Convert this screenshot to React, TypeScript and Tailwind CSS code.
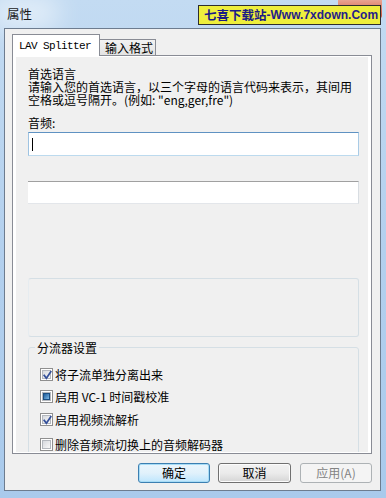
import React from "react";

type CheckState = "on" | "off" | "mixed";

function Check({ state }: { state: CheckState }) {
  return (
    <div className="relative w-[13px] h-[13px] shrink-0 border border-[#8f8f8f] bg-white p-[1px]">
      <div className="w-full h-full border border-[#b3b7bd] bg-gradient-to-br from-[#d6d9de] to-[#f8f8f8] flex items-center justify-center">
        {state === "mixed" && (
          <div className="w-[7px] h-[7px] border border-[#1d4f82] bg-gradient-to-br from-[#1f5e9c] to-[#7cb8e4]" />
        )}
      </div>
      {state === "on" && (
        <svg className="absolute left-0 top-0" width="13" height="13" viewBox="0 0 13 13">
          <path d="M3.2 6.4 L5.4 9.2 L9.8 2.8" fill="none" stroke="#34509a" strokeWidth="1.7" strokeLinecap="square" />
        </svg>
      )}
    </div>
  );
}

function Row({ state, children, mt }: { state: CheckState; children: React.ReactNode; mt: string }) {
  return (
    <div className={`flex items-center h-[13px] gap-[2px] ${mt}`}>
      <Check state={state} />
      <span className="text-[12px] leading-[13px] text-black whitespace-nowrap">{children}</span>
    </div>
  );
}

export default function App() {
  return (
    <div className="relative w-[386px] h-[498px] overflow-hidden bg-gradient-to-b from-[#c3dbf2] via-[#b3d0ee] to-[#a9caec] font-['Noto_Sans_CJK_SC',sans-serif]">
      <div className="absolute left-[-10px] top-[-4px] w-[70px] h-[34px] rounded-full bg-white/50 blur-md" />
      <div className="absolute left-[338px] top-0 w-[44px] h-[19px] rounded-b-[4px] bg-gradient-to-b from-[#e9a492] to-[#c8462f]" />
      <div className="absolute left-[198px] top-[5px] w-[183px] h-[20px] bg-[#eeee3c] border border-[#2e2e2e] flex items-center pl-[5px] z-20 whitespace-nowrap overflow-hidden">
        <span className="text-[12.5px] leading-[16px] font-bold text-[#1b1b86]">七喜下载站</span>
        <span className="font-['Liberation_Sans',sans-serif] text-[12px] leading-[16px] font-bold text-[#24208a]">-Www.7xdown.Com</span>
      </div>

      <div className="relative h-[28px] flex items-center pl-[7px]">
        <span className="text-[12.5px] leading-[14px] text-[#1a1a1a]">属性</span>
      </div>

      <div className="relative ml-[4px] mr-[5px] h-[463px] border border-[#6d7c8f] bg-[#f0f0f0] pl-[7px] pt-[5px]">
        <div className="w-[360px]">
          <div className="flex items-end h-[21px]">
            <div className="relative z-10 w-[88px] h-[22px] -mb-[1px] border border-b-0 border-[#898c95] bg-white flex items-center pl-[6px]">
              <span className="font-['Liberation_Mono',monospace] text-[11px] tracking-[-0.6px] leading-[14px] text-black">LAV Splitter</span>
            </div>
            <div className="-ml-[1px] w-[57px] h-[16px] border border-b-0 border-[#898c95] bg-gradient-to-b from-[#f2f2f2] to-[#e3e3e3] flex items-center pl-[5px]">
              <span className="text-[12px] leading-[14px] text-black">输入格式</span>
            </div>
          </div>
          <div className="h-[399px] border border-[#898c95] bg-white pt-[1px] pl-[3px] pr-[3px] pb-[1px]">
            <div className="h-full bg-[#f0f0f0] overflow-hidden pl-[12px] pt-[10px]">
              <div className="text-[12px] leading-[13px] text-black">
                <div>首选语言</div>
                <div className="whitespace-nowrap">请输入您的首选语言，以三个字母的语言代码来表示，其间用</div>
                <div className="whitespace-nowrap">空格或逗号隔开。(例如: "eng,ger,fre")</div>
              </div>
              <div className="mt-[10px] text-[12px] leading-[13px] text-black">音频:</div>
              <div className="mt-[3px] w-[331px] h-[24px] bg-white border border-t-[#5f92c2] border-l-[#9ec3e2] border-r-[#a9cbe6] border-b-[#bcdaee] flex items-center pl-[3px]">
                <div className="w-[1px] h-[13px] bg-black" />
              </div>
              <div className="mt-[25px] w-[331px] h-[23px] bg-white border-t border-t-[#a0a0a0] border-r border-r-[#d8dde2] border-b border-b-[#e3e6ea]" />
              <div className="mt-[74px] w-[331px] h-[59px] rounded-[3px] border border-[#d5dfe5] border-l-[#e6ecf0]" />
              <div className="relative mt-[10px] w-[331px] h-[120px] rounded-[3px] border border-[#d5dfe5] pl-[11px] pt-[20px]">
                <div className="absolute left-[6px] top-[-7px] px-[2px] bg-[#f0f0f0] text-[12px] leading-[13px] text-black">分流器设置</div>
                <Row state="on" mt="mt-0">将子流单独分离出来</Row>
                <Row state="mixed" mt="mt-[9px]">启用 VC-1 时间戳校准</Row>
                <Row state="on" mt="mt-[10px]">启用视频流解析</Row>
                <Row state="off" mt="mt-[12px]">删除音频流切换上的音频解码器</Row>
              </div>
            </div>
          </div>
          <div className="mt-[9px] flex justify-end">
            <button className="w-[72px] h-[20px] rounded-[3px] border border-[#3c7fb1] bg-gradient-to-b from-[#eaf6fd] via-[#e1f1fb] to-[#bee6fd] shadow-[inset_0_0_0_1px_#a7dcf6] text-[12px] leading-[14px] text-black">确定</button>
            <button className="ml-[8px] w-[73px] h-[20px] rounded-[3px] border border-[#707070] bg-gradient-to-b from-[#f2f2f2] via-[#ebebeb] to-[#d5d5d5] shadow-[inset_0_0_0_1px_#fcfcfc] text-[12px] leading-[14px] text-black">取消</button>
            <button className="ml-[9px] w-[72px] h-[20px] rounded-[3px] border border-[#adb2b5] bg-[#f4f4f4] text-[12px] leading-[14px] text-[#838383]">应用(A)</button>
          </div>
        </div>
      </div>
    </div>
  );
}
